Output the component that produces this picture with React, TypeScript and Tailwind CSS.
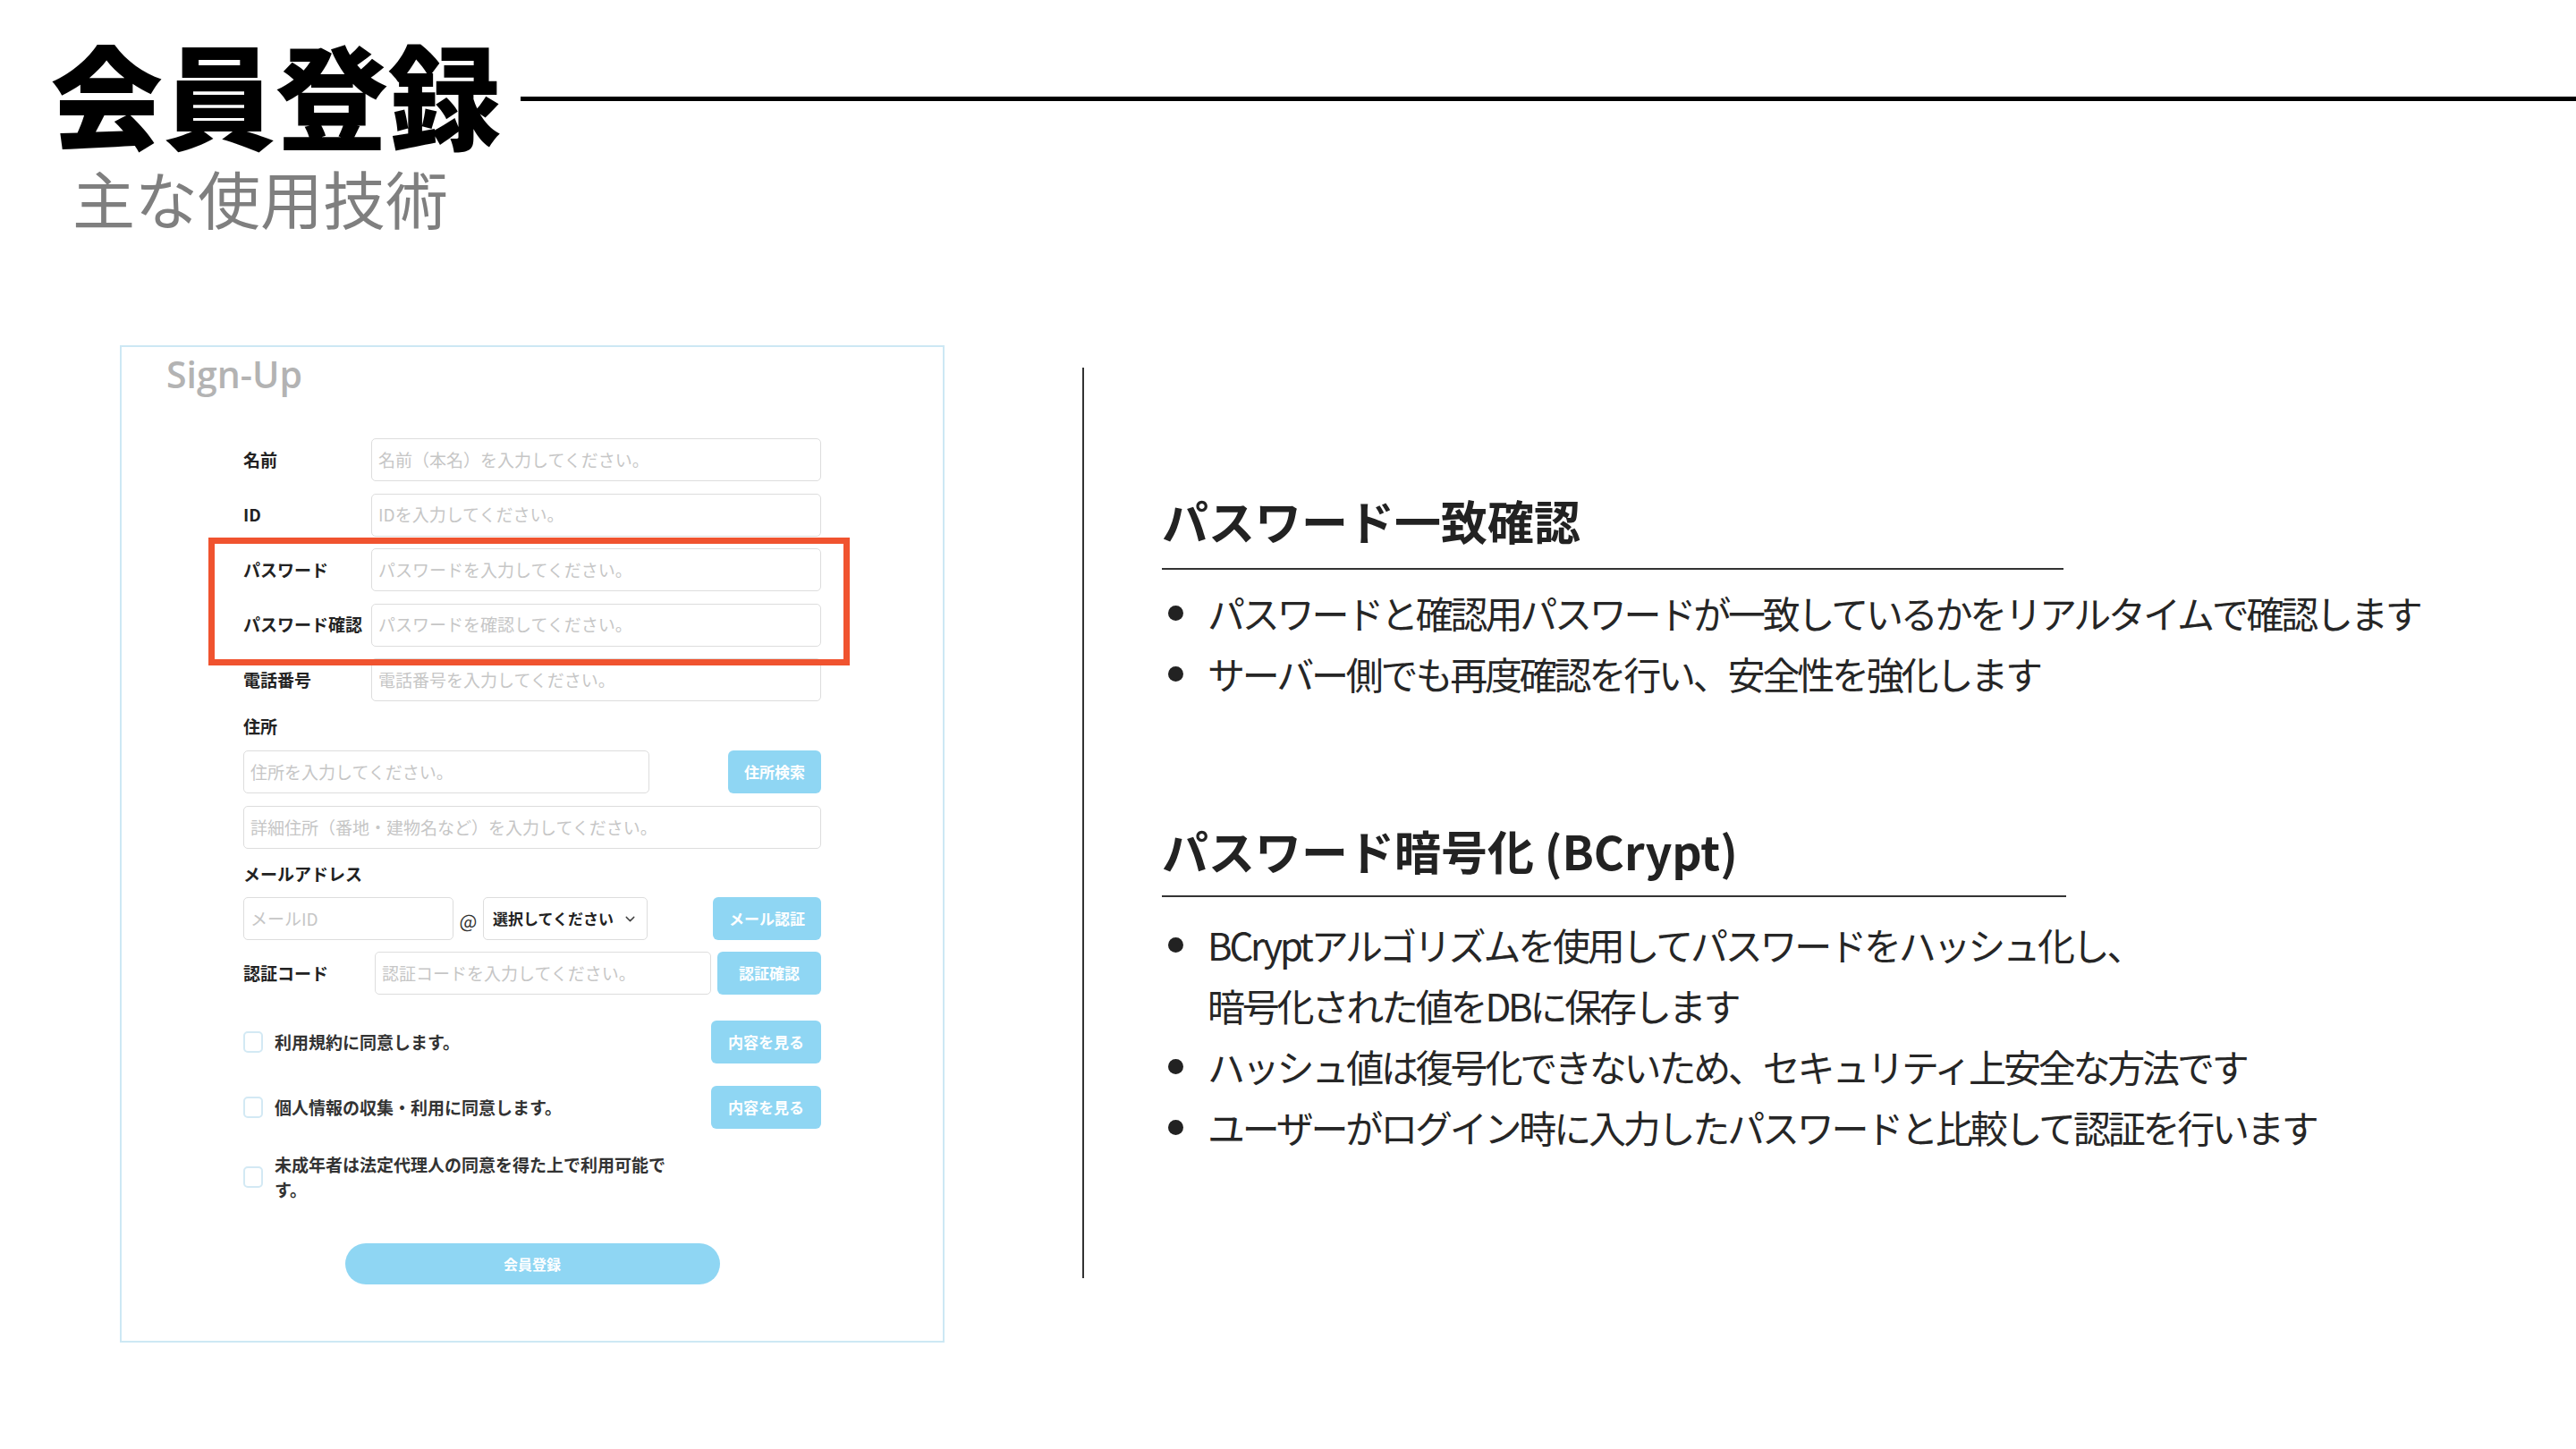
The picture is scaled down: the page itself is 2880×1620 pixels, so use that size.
import React from "react";
import { ChevronDown } from "lucide-react";

const JP = "font-['Noto_Sans_CJK_JP','Noto_Sans',sans-serif]";

function Input({ ph, className = "" }: { ph: string; className?: string }) {
  return (
    <div
      className={`h-[48px] border border-[#dddddd] rounded-[5px] bg-white flex items-center px-[7px] text-[19px] text-[#c6c6c6] whitespace-nowrap overflow-hidden ${className}`}
    >
      {ph}
    </div>
  );
}

function Btn({ label, className = "" }: { label: string; className?: string }) {
  return (
    <div
      className={`h-[48px] rounded-[6px] bg-[#8fd6f3] flex items-center justify-center text-white text-[17px] font-bold ${className}`}
    >
      {label}
    </div>
  );
}

function Row({ label, ph }: { label: string; ph: string }) {
  return (
    <div className="flex items-center h-[48px]">
      <div className="w-[143px] text-[19px] font-bold text-[#222] whitespace-nowrap">{label}</div>
      <Input ph={ph} className="flex-1" />
    </div>
  );
}

function Check() {
  return <div className="w-[22px] h-[24px] border-2 border-[#d3e9f4] rounded-[5px] shrink-0" />;
}

function Bullet({ children }: { children: React.ReactNode }) {
  return (
    <div className="flex items-start">
      <div className="h-[68px] flex items-center pl-[7px] pr-[27px]">
        <div className="w-[17px] h-[17px] rounded-full bg-[#222]" />
      </div>
      <div className="leading-[68px] text-[42px] text-[#262626] tracking-[-3.2px] whitespace-nowrap">
        {children}
      </div>
    </div>
  );
}

export default function App() {
  return (
    <div className={`w-[2880px] h-[1620px] bg-white overflow-hidden ${JP}`}>
      {/* header */}
      <div className="flex items-start pt-[40px]">
        <div className="pl-[56px] text-[126px] leading-none font-black text-black whitespace-nowrap">
          会員登録
        </div>
        <div className="flex-1 h-[5px] bg-black mt-[68px] ml-[22px]" />
      </div>
      <div className="pl-[81px] mt-[20px] text-[70px] leading-none text-[#7f7f7f] font-normal">
        主な使用技術
      </div>

      {/* body */}
      <div className="flex items-start mt-[130px] ml-[134px]">
        {/* card */}
        <div className="relative w-[922px] h-[1115px] border-2 border-[#cde8f4] shrink-0">
          <div className="pt-[10px] pl-[50px] text-[41px] leading-none font-semibold text-[#b3b3b3] font-['Open_Sans',sans-serif]">
            Sign-Up
          </div>

          <div className="pl-[136px] pr-[136px]">
            <div className="mt-[51px] flex flex-col gap-[13.5px]">
              <Row label="名前" ph="名前（本名）を入力してください。" />
              <Row label="ID" ph="IDを入力してください。" />
              <Row label="パスワード" ph="パスワードを入力してください。" />
              <Row label="パスワード確認" ph="パスワードを確認してください。" />
              <Row label="電話番号" ph="電話番号を入力してください。" />
            </div>

            <div className="mt-[14px] leading-[28px] text-[19px] font-bold text-[#222]">住所</div>
            <div className="mt-[13px] flex items-center justify-between">
              <Input ph="住所を入力してください。" className="w-[454px]" />
              <Btn label="住所検索" className="w-[104px]" />
            </div>
            <div className="mt-[14px]">
              <Input ph="詳細住所（番地・建物名など）を入力してください。" />
            </div>

            <div className="mt-[14px] leading-[28px] text-[19px] font-bold text-[#222]">メールアドレス</div>
            <div className="mt-[12px] flex items-center">
              <Input ph="メールID" className="w-[235px]" />
              <div className="w-[33px] text-center text-[21px] text-[#333] pt-[6px]">@</div>
              <div className="w-[184px] h-[48px] border border-[#dddddd] rounded-[5px] flex items-center pl-[10px] pr-[10px] justify-between">
                <span className="text-[17px] font-bold text-[#222] whitespace-nowrap">選択してください</span>
                <ChevronDown size={17} strokeWidth={2} className="text-[#444]" />
              </div>
              <div className="flex-1" />
              <Btn label="メール認証" className="w-[121px]" />
            </div>

            <div className="mt-[13px] flex items-center">
              <div className="w-[147px] text-[19px] font-bold text-[#222] whitespace-nowrap">認証コード</div>
              <Input ph="認証コードを入力してください。" className="w-[376px]" />
              <div className="flex-1" />
              <Btn label="認証確認" className="w-[116px]" />
            </div>

            <div className="mt-[29px] flex items-center">
              <Check />
              <div className="ml-[13px] text-[19px] font-bold text-[#333] whitespace-nowrap">利用規約に同意します。</div>
              <div className="flex-1" />
              <Btn label="内容を見る" className="w-[123px]" />
            </div>
            <div className="mt-[25px] flex items-center">
              <Check />
              <div className="ml-[13px] text-[19px] font-bold text-[#333] whitespace-nowrap">個人情報の収集・利用に同意します。</div>
              <div className="flex-1" />
              <Btn label="内容を見る" className="w-[123px]" />
            </div>
            <div className="mt-[26px] flex items-center">
              <Check />
              <div className="ml-[13px] text-[19px] leading-[28px] font-bold text-[#333]">
                未成年者は法定代理人の同意を得た上で利用可能で
                <br />
                す。
              </div>
            </div>
          </div>

          <div className="mt-[46px] flex justify-center">
            <div className="w-[419px] h-[46px] rounded-full bg-[#8fd6f3] flex items-center justify-center text-white text-[16px] font-bold">
              会員登録
            </div>
          </div>

          {/* annotation box */}
          <div className="absolute left-[97px] top-[213px] w-[717px] h-[143px] border-[7px] border-[#f0532f]" />
        </div>

        {/* divider */}
        <div className="ml-[154px] mt-[25px] w-[2px] h-[1018px] bg-[#333] shrink-0" />

        {/* right column */}
        <div className="ml-[87px]">
          <div className="mt-[166px] text-[52px] leading-[60px] font-bold text-[#222] whitespace-nowrap">
            パスワード一致確認
          </div>
          <div className="mt-[23px] w-[1008px] h-[2px] bg-[#333]" />
          <div className="mt-[14px]">
            <Bullet>パスワードと確認用パスワードが一致しているかをリアルタイムで確認します</Bullet>
            <Bullet>サーバー側でも再度確認を行い、安全性を強化します</Bullet>
          </div>

          <div className="mt-[134px] text-[52px] leading-[60px] font-bold text-[#222] whitespace-nowrap">
            パスワード暗号化 (BCrypt)
          </div>
          <div className="mt-[20px] w-[1011px] h-[2px] bg-[#333]" />
          <div className="mt-[19px]">
            <Bullet>
              BCryptアルゴリズムを使用してパスワードをハッシュ化し、
              <br />
              暗号化された値をDBに保存します
            </Bullet>
            <Bullet>ハッシュ値は復号化できないため、セキュリティ上安全な方法です</Bullet>
            <Bullet>ユーザーがログイン時に入力したパスワードと比較して認証を行います</Bullet>
          </div>
        </div>
      </div>
    </div>
  );
}
